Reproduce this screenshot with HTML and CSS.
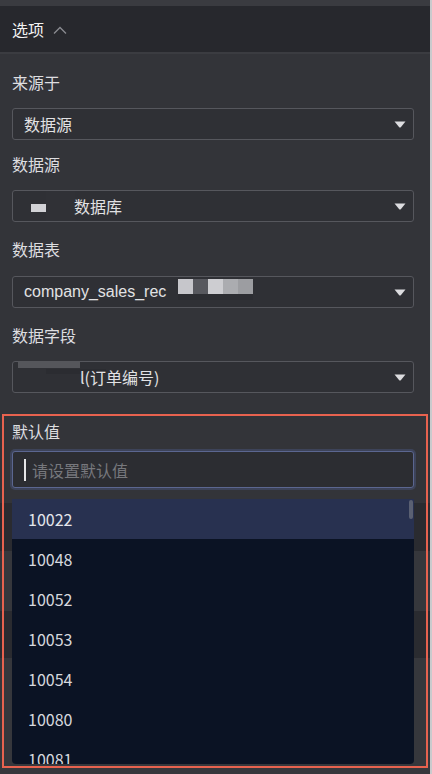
FILE: index.html
```html
<!DOCTYPE html>
<html lang="zh-CN">
<head>
    <meta charset="UTF-8">
    <title>选项</title>
    <link rel="stylesheet" href="styles.css">
</head>
<body>
    <div class="page">
        <div class="topbar"></div>
        <div class="section-head">
            <span>选项</span>
            <svg class="chevron" width="14" height="8" viewBox="0 0 14 8"><polyline points="1,7.5 7,1.5 13,7.5" fill="none" stroke="#8a8b91" stroke-width="1.3"/></svg>
        </div>

        <div class="form">
            <div class="field field-1">
                <div class="field-label">来源于</div>
                <div class="select">
                    <span class="value">数据源</span>
                    <svg class="arrow" width="12" height="7" viewBox="0 0 12 7"><path d="M0.5 0.5 H11.5 L6.8 6.2 Q6 7 5.2 6.2 Z" fill="#dcdcdf"/></svg>
                </div>
            </div>
            <div class="field field-2">
                <div class="field-label">数据源</div>
                <div class="select">
                    <span class="value"><span class="blot blot-light"></span><span class="blot blot-dark"></span>数据库</span>
                    <svg class="arrow" width="12" height="7" viewBox="0 0 12 7"><path d="M0.5 0.5 H11.5 L6.8 6.2 Q6 7 5.2 6.2 Z" fill="#dcdcdf"/></svg>
                </div>
            </div>
            <div class="field field-3">
                <div class="field-label">数据表</div>
                <div class="select">
                    <span class="value latin">company_sales_rec<span class="pix"><i class="p1"></i><i class="p2"></i><i class="p3"></i><i class="p4"></i><i class="p5"></i></span></span>
                    <svg class="arrow" width="12" height="7" viewBox="0 0 12 7"><path d="M0.5 0.5 H11.5 L6.8 6.2 Q6 7 5.2 6.2 Z" fill="#dcdcdf"/></svg>
                </div>
            </div>
            <div class="field field-4">
                <div class="field-label">数据字段</div>
                <div class="select select-masked">
                    <span class="value"><span class="bar-blot"></span>l(订单编号)</span>
                    <svg class="arrow" width="12" height="7" viewBox="0 0 12 7"><path d="M0.5 0.5 H11.5 L6.8 6.2 Q6 7 5.2 6.2 Z" fill="#dcdcdf"/></svg>
                </div>
            </div>

            <div class="field field-default">
                <div class="field-label">默认值</div>
                <div class="input">
                    <span class="caret"></span>
                    <span class="placeholder">请设置默认值</span>
                </div>
            </div>
        </div>

        <div class="band band-dark band-1"></div>
        <div class="band band-light band-2"></div>
        <div class="band band-dark band-3"></div>
        <div class="band band-light band-4"></div>

        <div class="dropdown">
            <div class="option active">10022</div>
            <div class="option">10048</div>
            <div class="option">10052</div>
            <div class="option">10053</div>
            <div class="option">10054</div>
            <div class="option">10080</div>
            <div class="option">10081</div>
            <div class="scroll-thumb"></div>
        </div>

        <div class="highlight"></div>
    </div>
</body>
</html>
```

FILE: styles.css
```css
body {
    margin: 0;
    padding: 0;
    background-color: #333439;
    font-family: "Noto Sans CJK SC", "Noto Sans", sans-serif;
    overflow: hidden;
}
.page {
    position: relative;
    width: 430px;
    height: 774px;
    border-right: 2px solid #cacacd;
    background-color: #333439;
    overflow: hidden;
}
.topbar {
    height: 6px;
    background-color: #3a3b40;
}
.section-head {
    height: 46px;
    background-color: #27282d;
    border-bottom: 2px solid #3b3c41;
    display: flex;
    align-items: center;
    padding-left: 12px;
    font-size: 16px;
    color: #f2f2f2;
}
.section-head .chevron {
    margin-left: 9px;
    margin-top: 1px;
}
.form {
    padding: 2px 16px 0 12px;
}
.field-label {
    height: 52px;
    display: flex;
    align-items: center;
    font-size: 16px;
    color: #dedee0;
}
.field-2 .field-label {
    height: 50px;
    padding-bottom: 3px;
    box-sizing: border-box;
}
.field-3 .field-label {
    height: 54px;
}
.field-4 .field-label {
    height: 53px;
}
.select {
    height: 32px;
    box-sizing: border-box;
    border: 1px solid #56575d;
    border-radius: 3px;
    background-color: #2f3035;
    display: flex;
    align-items: center;
    justify-content: space-between;
    padding: 0 7px 0 11px;
    font-size: 16px;
    color: #e2e2e4;
}
.select .value {
    display: flex;
    align-items: center;
    height: 100%;
    white-space: nowrap;
}
.select .latin {
    font-family: "Liberation Sans", Arial, sans-serif;
}
.blot {
    display: inline-block;
}
.blot-light {
    width: 15px;
    height: 8px;
    margin-left: 7px;
    margin-top: 4px;
    background-color: #d2d2d6;
}
.blot-dark {
    width: 29px;
    height: 30px;
    margin-right: -1px;
    background-color: #303136;
}
.pix {
    display: flex;
    align-self: flex-start;
    margin-top: 2px;
    margin-left: 12px;
    box-shadow: 0 6px 0 #2c2d32;
}
.pix i {
    display: block;
    width: 15px;
    height: 15px;
}
.pix .p1 { background-color: #c6c6cb; }
.pix .p2 { background-color: #57585e; }
.pix .p3 { background-color: #cdcdd1; }
.pix .p4 { background-color: #abacb0; }
.pix .p5 { background-color: #9c9da1; }
.select-masked {
    padding-left: 5px;
}
.bar-blot {
    display: inline-block;
    align-self: flex-start;
    width: 62px;
    height: 7px;
    margin-top: -1px;
    background-color: #55565b;
    box-shadow: 27px 7px 0 -1px #2b2c31;
}
.field-default .field-label {
    height: 36px;
    margin-top: 21px;
    align-items: flex-start;
    padding-top: 5px;
    box-sizing: border-box;
}
.input {
    height: 37px;
    margin-top: 1px;
    box-sizing: border-box;
    border: 1px solid #5b6690;
    border-radius: 3px;
    box-shadow: 0 0 0 2px rgba(74, 86, 128, 0.45);
    background-color: #2c2d32;
    display: flex;
    align-items: center;
    padding-left: 11px;
    font-size: 16px;
}
.caret {
    display: inline-block;
    width: 2px;
    height: 22px;
    background-color: #e6e6e8;
    margin-right: 6px;
}
.placeholder {
    color: #77787d;
}
.band {
    height: 48px;
}
.band-1 {
    margin-top: 15px;
    height: 48px;
}
.band-2 {
    height: 60px;
}
.band-3 {
    height: 47px;
}
.band-4 {
    height: 120px;
}
.band-dark {
    background-color: #2a2b30;
}
.band-light {
    background-color: #36373c;
}
.dropdown {
    position: absolute;
    left: 12px;
    top: 499px;
    width: 402px;
    height: 265px;
    background-color: #0b1324;
    border-radius: 0 0 4px 4px;
    overflow: hidden;
}
.option {
    height: 40px;
    display: flex;
    align-items: center;
    padding-left: 16px;
    font-size: 16px;
    color: #d6d8de;
}
.option.active {
    background-color: #283150;
    color: #e4e6ec;
}
.scroll-thumb {
    position: absolute;
    right: 1px;
    top: 1px;
    width: 4px;
    height: 19px;
    border-radius: 2px;
    background-color: #5a6072;
}
.highlight {
    position: absolute;
    left: 2px;
    top: 414px;
    width: 426px;
    height: 354px;
    box-sizing: border-box;
    border: 2px solid #e8624f;
    pointer-events: none;
}
```
